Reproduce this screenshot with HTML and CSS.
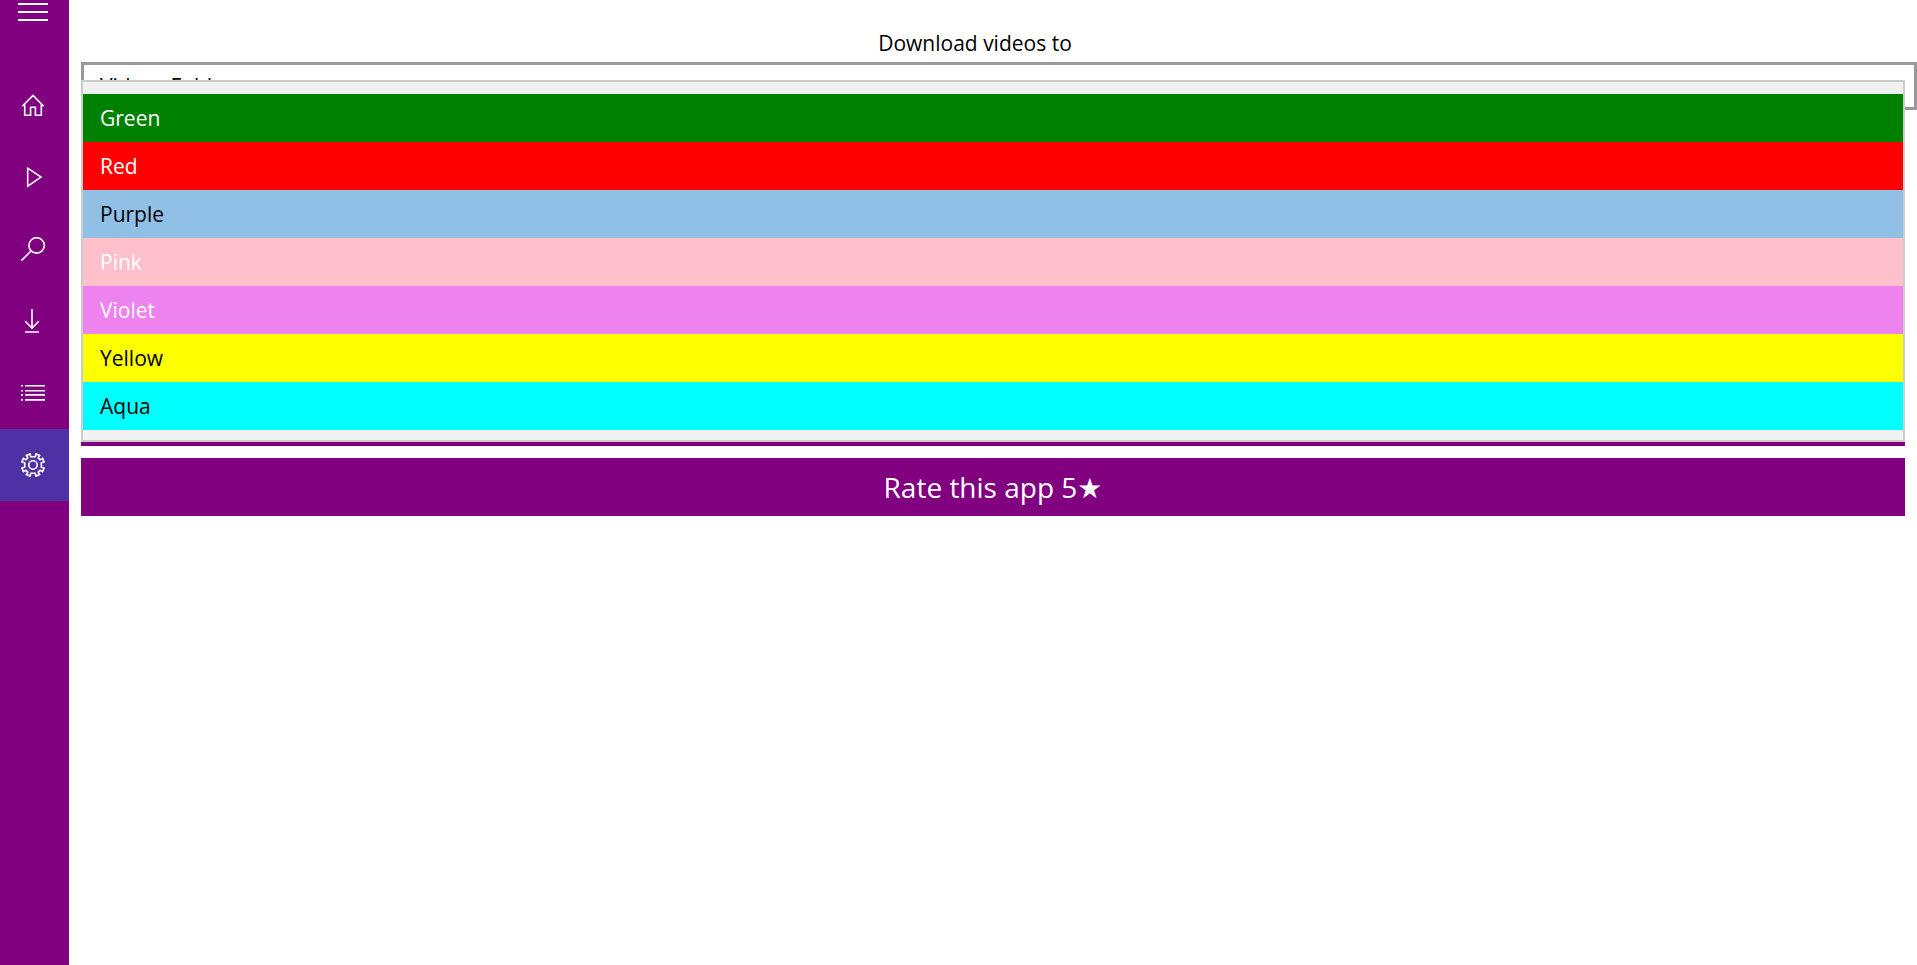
FILE: index.html
```html
<!DOCTYPE html>
<html lang="en">
<head>
<meta charset="utf-8">
<title>Settings</title>
<link rel="stylesheet" href="styles.css">
</head>
<body>
<div class="app">
  <nav class="sidebar">
    <button class="menu-button" type="button" aria-label="Menu">
      <svg class="menu-icon" viewBox="0 0 30 18"><path d="M0 1H30M0 9H30M0 17H30"/></svg>
    </button>
    <button class="nav-item" type="button" aria-label="Home">
      <svg class="icon" viewBox="0 0 24 24"><path d="M1.3 13.2 12 2.5 22.7 13.2M3.7 11.5V22.3H9.6V14.2H14.4V22.3H20.3V11.5"/></svg>
    </button>
    <button class="nav-item" type="button" aria-label="Play">
      <svg class="icon" viewBox="0 0 24 24"><path d="M6.7 3.2V21.2L20 12.1Z"/></svg>
    </button>
    <button class="nav-item" type="button" aria-label="Search">
      <svg class="icon" viewBox="0 0 24 24"><circle cx="15.6" cy="8.4" r="7.7"/><path d="M10.2 13.8 0.3 23.7"/></svg>
    </button>
    <button class="nav-item" type="button" aria-label="Downloads">
      <svg class="icon" viewBox="0 0 24 24"><path d="M11 0V19M4.2 12.3 11 19.1 17.8 12.3M4 23H18"/></svg>
    </button>
    <button class="nav-item" type="button" aria-label="List">
      <svg class="icon" viewBox="0 0 24 24"><path d="M0 4.7H2M4 4.7H24M0 9.7H2M4 9.7H24M0 13.9H2M4 13.9H24M0 18.9H2M4 18.9H24"/></svg>
    </button>
    <button class="nav-item nav-item-active" type="button" aria-label="Settings">
      <svg class="icon" viewBox="0 0 24 24"><path d="M9.8 3.7 9 .9 5.4 2.4 6.8 4.9 4.9 6.8 2.4 5.4.9 9 3.7 9.8V14.2L.9 15 2.4 18.6 4.9 17.2 6.8 19.1 5.4 21.6 9 23.1 9.8 20.3H14.2L15 23.1 18.6 21.6 17.2 19.1 19.1 17.2 21.6 18.6 23.1 15 20.3 14.2V9.8L23.1 9 21.6 5.4 19.1 6.8 17.2 4.9 18.6 2.4 15 .9 14.2 3.7Z"/><circle cx="12" cy="12" r="4.2"/></svg>
    </button>
  </nav>
  <main class="settings">
    <label class="field-label" for="folder">Download videos to</label>
    <select class="folder-select" id="folder"><option>Videos Folder</option></select>
    <div class="theme-field">
      <div class="color-list" role="listbox" aria-label="Theme color">
        <button class="color-option green" type="button" role="option">Green</button>
        <button class="color-option red" type="button" role="option">Red</button>
        <button class="color-option selected" type="button" role="option" aria-selected="true">Purple</button>
        <button class="color-option pink" type="button" role="option">Pink</button>
        <button class="color-option violet" type="button" role="option">Violet</button>
        <button class="color-option yellow" type="button" role="option">Yellow</button>
        <button class="color-option aqua" type="button" role="option">Aqua</button>
      </div>
    </div>
    <button class="rate-button" type="button">Rate this app 5<span class="star">★</span></button>
  </main>
</div>
</body>
</html>
```
FILE: styles.css
```css
* {
  box-sizing: border-box;
}

body {
  margin: 0;
  background: #fff;
  color: #000;
  font-family: "Open Sans", "Noto Sans", sans-serif;
  font-size: 21px;
}

button,
select {
  margin: 0;
  border: 0;
  border-radius: 0;
  font: inherit;
  color: inherit;
}

.app {
  display: flex;
  min-height: 100vh;
}

.sidebar {
  flex: none;
  display: flex;
  flex-direction: column;
  width: 69px;
  background: #800080;
}

.menu-button {
  display: flex;
  height: 69px;
  padding: 3px 18px;
  background: none;
}

.menu-icon {
  width: 30px;
  height: 18px;
  fill: none;
  stroke: #fff;
  stroke-width: 2;
}

.nav-item {
  display: flex;
  align-items: center;
  height: 72px;
  padding: 0 21px;
  background: none;
}

.nav-item-active {
  background: #4e31a4;
}

.icon {
  flex: none;
  width: 24px;
  height: 24px;
  fill: none;
  stroke: #fff;
  stroke-width: 1.6;
}

.settings {
  flex: 1;
  display: flex;
  flex-direction: column;
  min-width: 0;
  padding: 28px 12px 0;
}

.field-label {
  padding-right: 36px;
  line-height: 30px;
  text-align: center;
}

.folder-select {
  appearance: none;
  height: 48px;
  margin: 4px -12px 0 0;
  padding: 0 16px;
  border: 3px solid #999;
  background: #fff;
}

.theme-field {
  position: relative;
  height: 336px;
  border-bottom: 58px solid #800080;
}

.color-list {
  position: absolute;
  top: -30px;
  left: 0;
  right: 0;
  display: flex;
  flex-direction: column;
  padding: 12px 0 10px;
  border: 2px solid #ccc;
  background: #f1f1f1;
}

.color-option {
  height: 48px;
  padding: 0 17px;
  text-align: left;
}

.green {
  background: #008000;
  color: #fff;
}

.red {
  background: #f00;
  color: #fff;
}

.selected {
  background: #91c0e7;
}

.pink {
  background: #ffc0cb;
  color: #fff;
}

.violet {
  background: #ee82ee;
  color: #fff;
}

.yellow {
  background: #ff0;
}

.aqua {
  background: #0ff;
}

.rate-button {
  height: 58px;
  margin-top: 12px;
  padding: 0;
  background: #800080;
  color: #fff;
  font-size: 28px;
}

.star {
  font-family: "DejaVu Sans", sans-serif;
}
```
